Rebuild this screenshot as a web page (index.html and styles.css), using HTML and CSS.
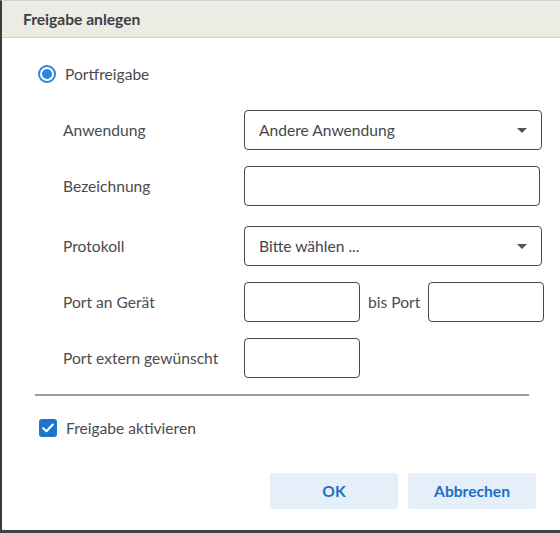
FILE: index.html
```html
<!DOCTYPE html>
<html lang="de">

<head>
  <meta charset="UTF-8">
  <meta name="viewport" content="width=device-width, initial-scale=1.0">
  <title>Freigabe anlegen</title>
  <link rel="stylesheet" href="styles.css">
</head>

<body>
  <div class="dialog">
    <div class="dialog-header">Freigabe anlegen</div>

    <form class="dialog-body">
      <label class="choice">
        <span class="radio"></span>
        Portfreigabe
      </label>

      <div class="fields">
        <div class="field">
          <span class="field-label">Anwendung</span>
          <div class="select">
            <span>Andere Anwendung</span>
            <span class="caret"></span>
          </div>
        </div>

        <div class="field field-wide">
          <span class="field-label">Bezeichnung</span>
          <div class="input input-full"></div>
        </div>

        <div class="field">
          <span class="field-label">Protokoll</span>
          <div class="select">
            <span>Bitte wählen ...</span>
            <span class="caret"></span>
          </div>
        </div>

        <div class="field">
          <span class="field-label">Port an Gerät</span>
          <div class="port-range">
            <div class="input input-port"></div>
            <span class="range-label">bis Port</span>
            <div class="input input-port"></div>
          </div>
        </div>

        <div class="field">
          <span class="field-label">Port extern gewünscht</span>
          <div class="input input-port"></div>
        </div>
      </div>

      <hr class="divider">

      <label class="choice choice-check">
        <span class="checkbox">
          <svg width="12" height="10" viewBox="0 0 12 10">
            <path d="M1.2 5.2 L4.4 8.2 L10.8 1.6" fill="none" stroke="#fff" stroke-width="2.2" stroke-linecap="round" stroke-linejoin="round"/>
          </svg>
        </span>
        Freigabe aktivieren
      </label>

      <div class="actions">
        <button type="button" class="btn">OK</button>
        <button type="button" class="btn">Abbrechen</button>
      </div>
    </form>
  </div>
</body>

</html>
```

FILE: styles.css
```css
body {
  margin: 0;
  font-family: "Source Sans Pro", Lato, sans-serif;
  font-size: 15.6px;
  color: #4a4c50;
  background: #fff;
}

.dialog {
  height: 533px;
  box-sizing: border-box;
  border-top: 1px solid #d2d2d2;
  border-left: 2px solid #3d3d3d;
  border-bottom: 3px solid #404040;
}

.dialog-header {
  height: 36px;
  line-height: 36px;
  padding-left: 21px;
  background: #ecebe4;
  border-bottom: 1px solid #cfcfcf;
  font-weight: bold;
  color: #3b4049;
}

.dialog-body {
  padding: 26px 0 0 36px;
}

.choice {
  display: flex;
  align-items: center;
  gap: 9px;
  height: 20px;
}

.radio {
  width: 18px;
  height: 18px;
  box-sizing: border-box;
  border: 2px solid #2a86df;
  border-radius: 50%;
  display: flex;
  align-items: center;
  justify-content: center;
}

.radio::after {
  content: "";
  width: 10px;
  height: 10px;
  border-radius: 50%;
  background: #2a86df;
}

.fields {
  display: flex;
  flex-direction: column;
  gap: 16px;
  margin-top: 26px;
}

.field {
  display: grid;
  grid-template-columns: 181px auto;
  align-items: center;
  padding-left: 25px;
}

.field-wide {
  margin-bottom: 4px;
}

.select,
.input {
  height: 40px;
  box-sizing: border-box;
  border: 1px solid #45484d;
  border-radius: 4px;
  background: #fff;
}

.select {
  width: 298px;
  display: flex;
  align-items: center;
  justify-content: space-between;
  padding: 0 14px 0 14px;
  color: #45474b;
}

.caret {
  width: 0;
  height: 0;
  border-left: 5px solid transparent;
  border-right: 5px solid transparent;
  border-top: 5px solid #50545a;
}

.input-full {
  width: 296px;
}

.port-range {
  display: flex;
  align-items: center;
}

.input-port {
  width: 116px;
}

.range-label {
  margin: 0 8px;
}

.divider {
  margin: 16px 0 0 -3px;
  width: 494px;
  border: 0;
  border-top: 2px solid #9a9a9a;
}

.choice-check {
  margin-top: 22px;
  padding-left: 1px;
}

.checkbox {
  width: 18px;
  height: 18px;
  border-radius: 3px;
  background: #1b75d0;
  display: flex;
  align-items: center;
  justify-content: center;
}

.actions {
  display: flex;
  gap: 10px;
  margin-top: 35px;
  padding-left: 232px;
}

.btn {
  width: 128px;
  height: 36px;
  border: 0;
  border-radius: 3px;
  background: #e5eff9;
  color: #1b6fc6;
  font-family: inherit;
  font-size: 15.6px;
  font-weight: bold;
  cursor: pointer;
}
```
